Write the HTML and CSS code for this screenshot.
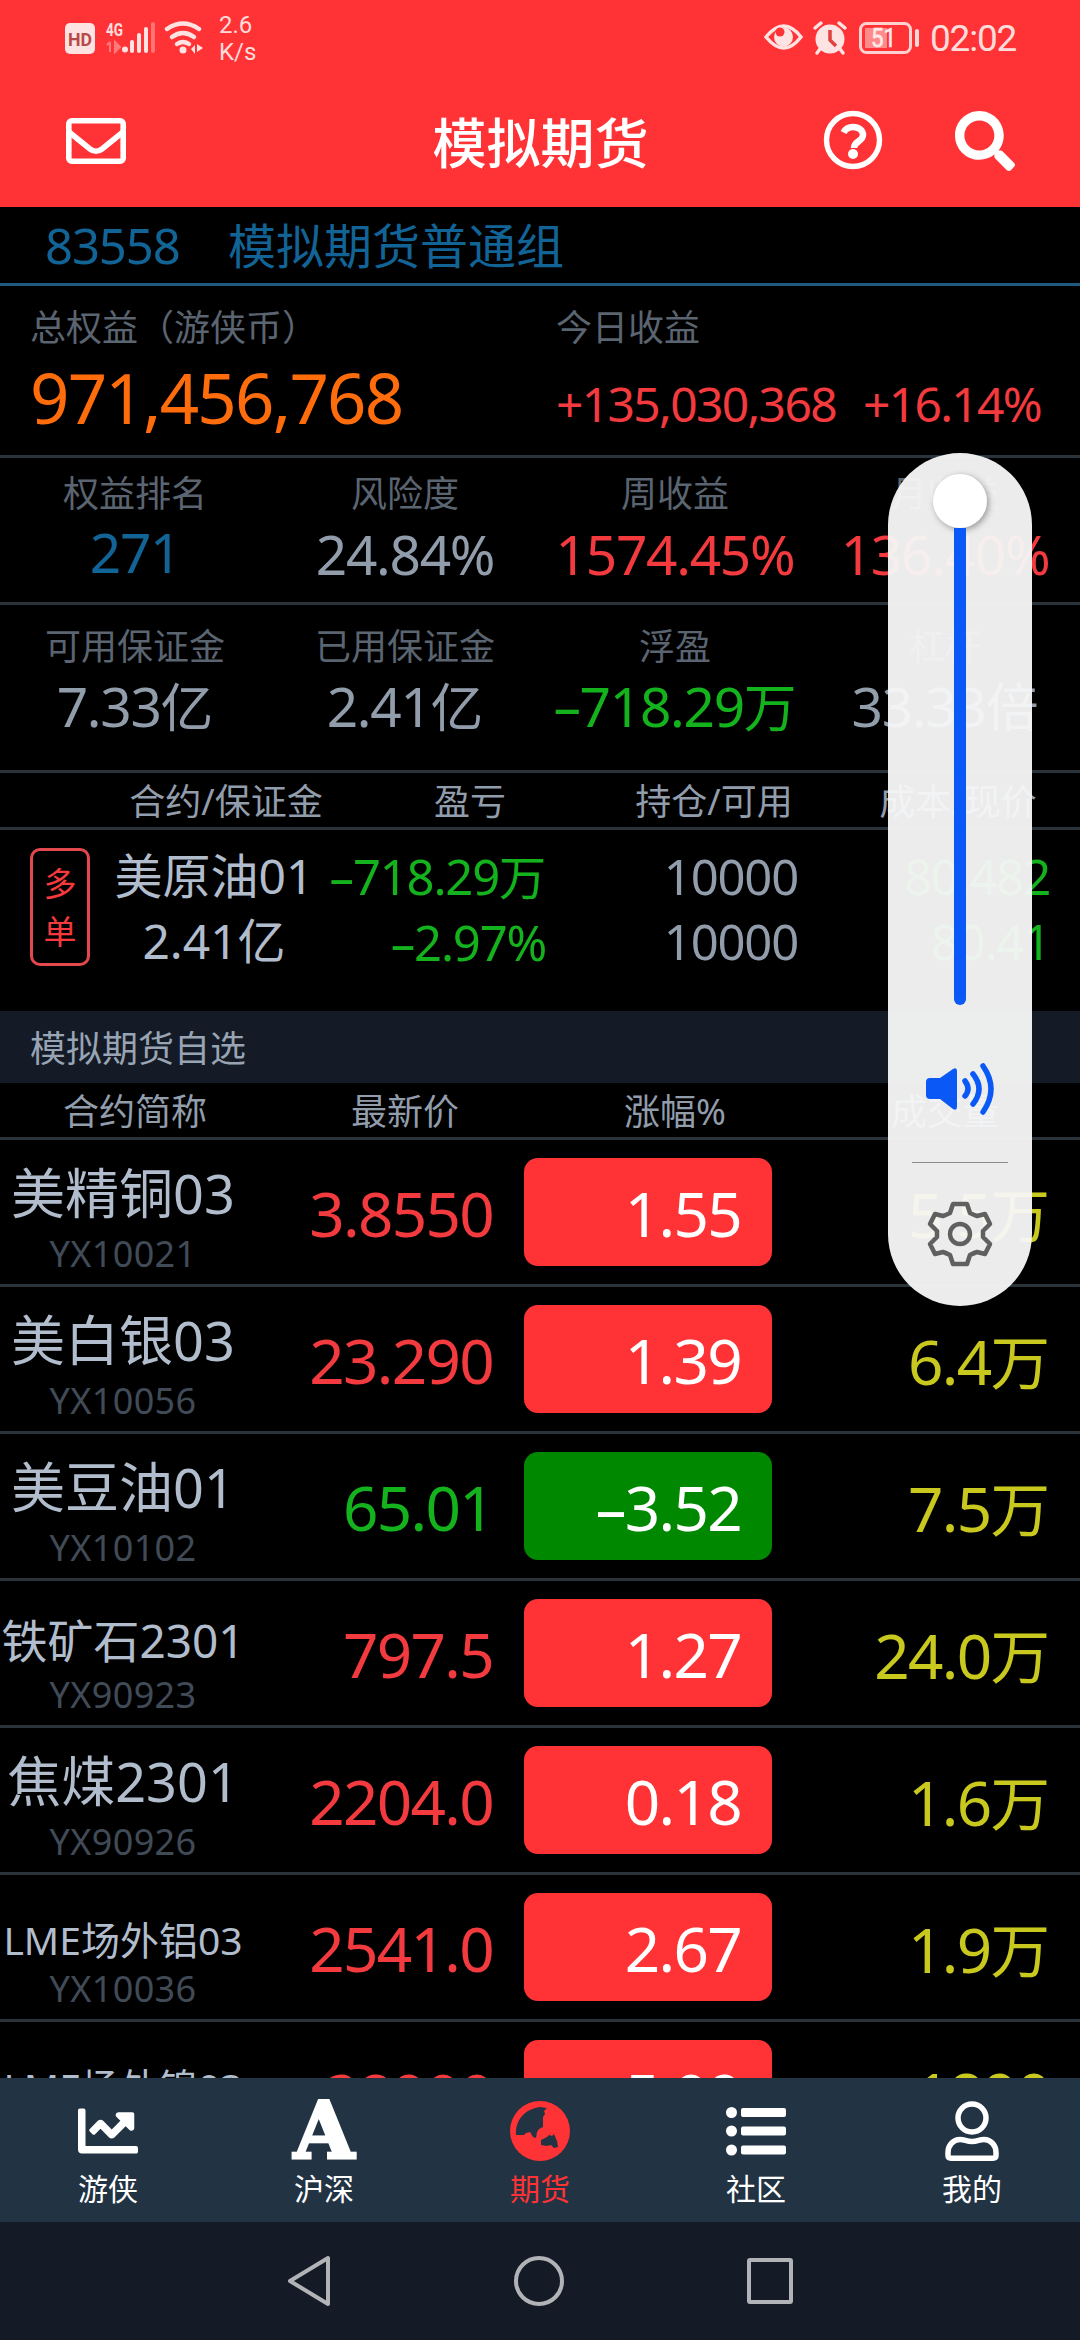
FILE: index.html
```html
<!DOCTYPE html>
<html lang="zh-CN">
<head>
	<meta charset="utf-8">
	<title>模拟期货</title>
	<link rel="stylesheet" href="styles.css">
</head>
<body>
	<div class="screen">
		<header class="header">
			<div class="status">
				<svg class="sig" width="142" height="44" viewBox="0 0 142 44">
					<rect x="0" y="7" width="30" height="31" rx="5" fill="#ffe3e3"/>
					<text x="3" y="29.500" font-size="19" font-weight="bold" fill="#b64a4a" textLength="24" lengthAdjust="spacingAndGlyphs">HD</text>
					<text x="41" y="20" font-size="19" font-weight="bold" fill="#ffdede" textLength="17" lengthAdjust="spacingAndGlyphs">4G</text>
					<path d="M45 26v10M42 29l3-3M50 26v10l5-5z" fill="#ff7a7a" stroke="#ff7a7a" stroke-width="2"/>
					<g fill="#ffe3e3">
						<circle cx="60" cy="33.500" r="3"/>
						<rect x="65" y="24" width="4" height="13" rx="2"/>
						<rect x="72" y="17" width="4" height="20" rx="2"/>
						<rect x="79" y="11" width="4" height="26" rx="2"/>
						<rect x="86" y="6" width="4" height="31" rx="2" fill="#ff7373"/>
					</g>
					<g fill="none" stroke="#ffe3e3" stroke-width="4.500" stroke-linecap="round">
						<path d="M102 13q16-11 32 0"/>
						<path d="M107 21q11-8 22 0"/>
						<path d="M112 28q6-4 12 0"/>
					</g>
					<circle cx="118" cy="34" r="3.500" fill="#ffe3e3"/>
					<path d="M126 33l4-4v9zM132 28v8l6-4z" fill="#ffe3e3"/>
				</svg>
				<div class="speed">2.6<br>K/s</div>
				<svg class="eye" width="156" height="40" viewBox="0 0 156 40">
					<path d="M2 19Q20-3 37 19Q20 41 2 19z" fill="none" stroke="#ffe3e3" stroke-width="3.500"/>
					<circle cx="19.500" cy="19" r="9.500" fill="#ffe3e3"/>
					<circle cx="16" cy="14" r="4.500" fill="#ff3335"/>
					<circle cx="66" cy="21" r="14.500" fill="#ffe3e3"/>
					<path d="M51 10l6-5M81 10l-6-5M56 31l-3 4M76 31l3 4" stroke="#ffe3e3" stroke-width="3.500" stroke-linecap="round"/>
					<path d="M66 12v10l6 6" fill="none" stroke="#e04040" stroke-width="3.500"/>
					<rect x="96.500" y="5.500" width="50" height="29" rx="6" fill="none" stroke="#ffd0d0" stroke-width="3"/>
					<rect x="101" y="10" width="22" height="20" fill="#ff8a8a"/>
					<text x="107" y="29" font-size="25" fill="#ffeaea" stroke="#ffeaea" stroke-width=".6" textLength="25" lengthAdjust="spacingAndGlyphs">51</text>
					<rect x="151" y="11" width="4" height="18" rx="2" fill="#ffd6d6"/>
				</svg>
				<div class="clock">02:02</div>
			</div>
			<div class="titlebar">
				<svg class="mail" width="60" height="46" viewBox="0 0 60 46" fill="none" stroke="#fff">
					<rect x="2.800" y="2.800" width="54.400" height="40.400" rx="3" stroke-width="5.600"/>
					<path d="M3 14l21 17q6 4.500 12 0l21-17" stroke-width="5.600"/>
				</svg>
				<h1 class="title">模拟期货</h1>
				<div class="tools">
					<svg width="60" height="60" viewBox="0 0 60 60" fill="none" stroke="#fff">
						<circle cx="30" cy="30" r="26.500" stroke-width="5.400"/>
						<path d="M20.500 22.500q3-5.500 9.500-5.500c6 0 10 3.500 10 8 0 6.500-9 6-9 13" stroke-width="6.500"/>
						<circle cx="30" cy="44" r="5" fill="#fff" stroke="none"/>
					</svg>
					<svg width="60" height="62" viewBox="0 0 512 512" fill="#fff"><path d="M505 442.700L405.300 343c-4.500-4.500-10.600-7-17-7H372c27.600-35.300 44-79.700 44-128C416 93.100 322.900 0 208 0S0 93.100 0 208s93.100 208 208 208c48.300 0 92.700-16.400 128-44v16.300c0 6.400 2.500 12.500 7 17l99.700 99.700c9.400 9.400 24.600 9.400 33.900 0l28.300-28.300c9.400-9.400 9.400-24.600.1-34zM208 336c-70.700 0-128-57.200-128-128 0-70.700 57.200-128 128-128 70.700 0 128 57.200 128 128 0 70.700-57.200 128-128 128z"/></svg>
				</div>
			</div>
		</header>

		<main class="content">
			<div class="account"><span class="acc-id">83558</span><span>模拟期货普通组</span></div>

			<section class="total">
				<div class="total-left">
					<div class="label">总权益（游侠币）</div>
					<div class="total-num">971,456,768</div>
				</div>
				<div class="total-right">
					<div class="label">今日收益</div>
					<div class="today"><span>+135,030,368</span><span>+16.14%</span></div>
				</div>
			</section>

			<section class="stats">
				<div class="stat"><div class="label">权益排名</div><div class="val rank">271</div></div>
				<div class="stat"><div class="label">风险度</div><div class="val">24.84%</div></div>
				<div class="stat"><div class="label">周收益</div><div class="val red">1574.45%</div></div>
				<div class="stat"><div class="label">月收益</div><div class="val red">136.40%</div></div>
			</section>
			<section class="stats stats2">
				<div class="stat"><div class="label">可用保证金</div><div class="val">7.33<span class="unit">亿</span></div></div>
				<div class="stat"><div class="label">已用保证金</div><div class="val">2.41<span class="unit">亿</span></div></div>
				<div class="stat"><div class="label">浮盈</div><div class="val green">–718.29<span class="unit">万</span></div></div>
				<div class="stat"><div class="label">杠杆</div><div class="val">33.33<span class="unit">倍</span></div></div>
			</section>

			<div class="thead pos-head"><span>合约/保证金</span><span>盈亏</span><span>持仓/可用</span><span>成本/现价</span></div>
			<section class="pos">
				<div class="badge">多<br>单</div>
				<div class="pos-name">美原油01<br>2.41亿</div>
				<div class="pos-cell pos-profit green">–718.29<span class="unit">万</span><br>–2.97%</div>
				<div class="pos-cell">10000<br>10000</div>
				<div class="pos-cell green">80.482<br>80.41</div>
			</section>

			<div class="band">模拟期货自选</div>
			<div class="thead"><span>合约简称</span><span>最新价</span><span>涨幅%</span><span>成交量</span></div>

			<div class="row">
				<div class="name"><b>美精铜03</b><i>YX10021</i></div>
				<div class="price red">3.8550</div><div class="chg up">1.55</div><div class="vol">5.5<span class="unit">万</span></div>
			</div>
			<div class="row">
				<div class="name"><b>美白银03</b><i>YX10056</i></div>
				<div class="price red">23.290</div><div class="chg up">1.39</div><div class="vol">6.4<span class="unit">万</span></div>
			</div>
			<div class="row">
				<div class="name"><b>美豆油01</b><i>YX10102</i></div>
				<div class="price green">65.01</div><div class="chg down">–3.52</div><div class="vol">7.5<span class="unit">万</span></div>
			</div>
			<div class="row">
				<div class="name"><b class="mid">铁矿石2301</b><i>YX90923</i></div>
				<div class="price red">797.5</div><div class="chg up">1.27</div><div class="vol">24.0<span class="unit">万</span></div>
			</div>
			<div class="row">
				<div class="name"><b>焦煤2301</b><i>YX90926</i></div>
				<div class="price red">2204.0</div><div class="chg up">0.18</div><div class="vol">1.6<span class="unit">万</span></div>
			</div>
			<div class="row">
				<div class="name"><b class="small">LME场外铝03</b><i>YX10036</i></div>
				<div class="price red">2541.0</div><div class="chg up">2.67</div><div class="vol">1.9<span class="unit">万</span></div>
			</div>
			<div class="row">
				<div class="name"><b class="small">LME场外镍03</b><i>YX10038</i></div>
				<div class="price red">28900</div><div class="chg up">5.09</div><div class="vol">1890</div>
			</div>
		</main>

		<nav class="tabs">
			<div class="tab">
				<svg width="60" height="60" viewBox="0 0 512 512" fill="#fff"><path d="M496 384H64V80c0-8.840-7.160-16-16-16H16C7.160 64 0 71.160 0 80v336c0 17.670 14.330 32 32 32h464c8.840 0 16-7.160 16-16v-32c0-8.840-7.160-16-16-16zM464 96H345.940c-21.380 0-32.090 25.850-16.970 40.970l32.400 32.400L288 242.750l-73.370-73.370c-12.500-12.500-32.760-12.500-45.250 0l-68.690 68.690c-6.250 6.250-6.250 16.380 0 22.630l22.620 22.620c6.250 6.250 16.380 6.250 22.630 0L192 237.250l73.370 73.370c12.500 12.500 32.760 12.500 45.250 0l96-96 32.400 32.400c15.120 15.120 40.970 4.410 40.970-16.970V112c.01-8.840-7.150-16-15.990-16z"/></svg>
				<span>游侠</span>
			</div>
			<div class="tab">
				<div class="letter">A</div>
				<span>沪深</span>
			</div>
			<div class="tab on">
				<svg width="60" height="60" viewBox="0 0 60 60">
					<circle cx="30" cy="30" r="30" fill="#ff3335"/>
					<path d="M6 34C5 20 14 8 30 6l7 1-3 3 1 3-2 3v10l-4 2-2 3-1 6-3-1-3-5-4 1-2 2z" fill="#223343"/>
					<path d="M31 39l6-3 2-2 3 1 2-2 3 7 1 6-4 1-3-3-4 1-6-1z" fill="#223343"/>
				</svg>
				<span>期货</span>
			</div>
			<div class="tab">
				<svg width="60" height="60" viewBox="0 0 60 60" fill="#fff">
					<circle cx="5.500" cy="11.500" r="5.500"/><circle cx="5.500" cy="30" r="5.500"/><circle cx="5.500" cy="49" r="5.500"/>
					<rect x="15" y="7" width="45" height="9" rx="2"/><rect x="15" y="25.500" width="45" height="9" rx="2"/><rect x="15" y="44.500" width="45" height="9" rx="2"/>
				</svg>
				<span>社区</span>
			</div>
			<div class="tab">
				<svg width="54" height="60" viewBox="0 0 54 60" fill="none" stroke="#fff" stroke-width="5.500">
					<circle cx="27" cy="17" r="14"/>
					<path d="M15 38.500c5 0 6 2 12 2s7-2 12-2c7 0 12 6 12 13v3q0 2.700-3 2.700H6q-3 0-3-2.700v-3c0-7 5-13 12-13z"/>
				</svg>
				<span>我的</span>
			</div>
		</nav>
		<div class="sysnav">
			<svg width="46" height="54" viewBox="0 0 46 54"><path d="M42 4v46L4 27z"/></svg>
			<svg width="52" height="52" viewBox="0 0 52 52"><circle cx="26" cy="26" r="23"/></svg>
			<svg width="48" height="48" viewBox="0 0 48 48"><rect x="3" y="3" width="42" height="42" rx="1"/></svg>
		</div>

		<!-- volume panel -->
		<div class="volume">
			<div class="knob"></div>
			<div class="track"></div>
			<svg class="speaker" width="72" height="54" viewBox="0 0 72 54">
				<path d="M5 16h10L28 7q4-2 4 2v36q0 4-4 2L15 37H5q-4 0-4-4V20q0-4 4-4z" fill="#0a59f7"/>
				<path d="M40 19q6 8 0 15M48 12q12 15 0 30M58 4q16 23 0 46" fill="none" stroke="#0a59f7" stroke-width="5.500" stroke-linecap="round"/>
			</svg>
			<div class="line"></div>
			<svg class="gear" width="68" height="68" viewBox="-34 -34 68 68" fill="none" stroke="#606060" stroke-width="4.500" stroke-linejoin="round">
				<path d="M-7-30H7L10-21Q14-19 17-18L25-20L30-10L23-3V3L30 10L25 20L17 18Q14 19 10 21L7 30H-7L-10 21Q-14 19-17 18L-25 20L-30 10L-23 3V-3L-30-10L-25-20L-17-18Q-14-19-10-21z"/>
				<circle r="10"/>
			</svg>
		</div>
	</div>
</body>
</html>
```
FILE: styles.css
```css
body{
	margin:0;
	background:#000;
}
.screen{
	position:relative;
	width:1080px;
	height:2340px;
	overflow:hidden;
	display:flex;
	flex-direction:column;
	background:#000;
	font-family:"Noto Sans","Noto Sans CJK SC",sans-serif;
	color:#929dac;
	white-space:nowrap;
}
svg{
	display:block;
	flex:none;
}

/* header */
.header{
	height:207px;
	background:#ff3335;
	flex:none;
}
.status{
	height:76px;
	padding:0 66px 0 65px;
	display:flex;
	align-items:center;
	font-family:Roboto,sans-serif;
	color:#ffdcdc;
}
.speed{
	margin-left:12px;
	font-size:24px;
	line-height:27px;
	padding-top:2px;
}
.eye{
	margin-left:auto;
}
.clock{
	margin-left:10px;
	width:84px;
	font-size:37px;
	letter-spacing:-1.2px;
}
.titlebar{
	height:130px;
	display:grid;
	grid-template-columns:1fr auto 1fr;
	align-items:center;
	padding:0 65px 0 66px;
}
.title{
	margin:0;
	padding-top:4px;
	font-size:54px;
	font-weight:500;
	line-height:70px;
	color:#fff;
}
.tools{
	display:flex;
	justify-content:flex-end;
	gap:72px;
}

/* account */
.content{
	height:1871px;
	overflow:hidden;
	flex:none;
}
.account{
	height:76px;
	border-bottom:3px solid #1d5a7d;
	padding-left:45px;
	display:flex;
	gap:50px;
	font-size:48px;
	line-height:77px;
	color:#126497;
}
.acc-id{
	width:133px;
	font-size:49px;
	letter-spacing:-1.1px;
}
.label{
	font-size:36px;
	line-height:50px;
	color:#5b6571;
}
.total{
	height:169px;
	border-bottom:3px solid #2a323a;
	display:flex;
	padding-left:30px;
}
.total-left{
	width:526px;
	padding-top:17px;
}
.total-right{
	padding-top:17px;
}
.total-num{
	font-size:69px;
	line-height:92px;
	margin-top:-2px;
	letter-spacing:-1.8px;
	color:#ff6c0c;
}
.today{
	display:flex;
	gap:27px;
	margin-top:11px;
	font-size:48px;
	line-height:80px;
	letter-spacing:-1.7px;
	color:#f23a3f;
}
.stats{
	height:144px;
	border-bottom:3px solid #2a323a;
	display:grid;
	grid-template-columns:repeat(4,270px);
	text-align:center;
}
.stat{
	padding-top:11px;
}
.val{
	font-size:55px;
	line-height:76px;
	margin-top:-3px;
	letter-spacing:-1.3px;
}
.unit{
	font-size:.96em;
	letter-spacing:0;
}
.stats2{
	height:165px;
}
.stats2 .stat{
	padding-top:17px;
}
.stats2 .val{
	margin-top:-4px;
}
.red{color:#f23a3f;}
.green{color:#14b31e;}
.rank{
	margin-top:-5px;
	color:#126497;
}

/* positions */
.thead{
	height:54px;
	border-bottom:3px solid #2a323a;
	display:grid;
	grid-template-columns:repeat(4,1fr);
	text-align:center;
	font-size:36px;
	line-height:58px;
}
.pos-head{
	padding-left:104px;
}
.pos{
	height:181px;
	display:flex;
	padding:0 30px;
	font-size:49px;
	line-height:65px;
}
.badge{
	box-sizing:border-box;
	width:60px;
	height:118px;
	margin-top:18px;
	padding-top:9px;
	border:3px solid #e2484c;
	border-radius:10px;
	text-align:center;
	font-size:33px;
	line-height:48px;
	color:#f5393d;
}
.pos-name{
	width:248px;
	padding-top:13px;
	text-align:center;
	font-size:48px;
	color:#b1bdcc;
}
.pos-cell{
	width:252px;
	padding-top:14px;
	text-align:right;
	letter-spacing:-1.2px;
}
/* wider than its column, the long sums reach back under the name */
.pos-profit{
	width:238px;
	margin-left:-30px;
}

/* watch list */
.band{
	height:72px;
	padding-left:30px;
	background:#141b26;
	font-size:36px;
	line-height:76px;
	color:#98a4b3;
}
.row{
	height:144px;
	border-bottom:3px solid #2a323a;
	display:flex;
	align-items:center;
	font-size:62px;
	letter-spacing:-1.7px;
}
.name{
	box-sizing:border-box;
	width:246px;
	height:144px;
	padding-bottom:8px;
	display:flex;
	flex-direction:column;
	justify-content:flex-end;
	align-items:center;
	letter-spacing:0;
}
.name b{
	font-size:54px;
	font-weight:400;
	line-height:1.42;
	color:#b1bdcc;
}
.name .mid{
	font-size:46px;
}
.name .small{
	font-size:39px;
}
.name i{
	font-size:36px;
	font-style:normal;
	line-height:44px;
	letter-spacing:.4px;
	color:#414b57;
}
.price{
	width:247px;
	padding-top:2px;
	text-align:right;
}
.chg{
	box-sizing:border-box;
	width:248px;
	height:108px;
	margin-left:31px;
	padding-right:31px;
	border-radius:14px;
	text-align:right;
	line-height:111px;
	color:#fff;
}
.up{background:#ff3335;}
.down{background:#008800;}
.vol{
	width:278px;
	text-align:right;
	color:#c8c81e;
}

/* bottom */
.tabs{
	height:144px;
	flex:none;
	background:#223343;
	display:grid;
	grid-template-columns:repeat(5,1fr);
}
.tab{
	display:flex;
	flex-direction:column;
	align-items:center;
	padding-top:23px;
	font-size:30px;
	line-height:40px;
	color:#fff;
}
.tab span{
	margin-top:8px;
}
.on{
	color:#ff3335;
}
.letter{
	height:60px;
	font:bold 78px/60px "DejaVu Serif",serif;
	-webkit-text-stroke:3px #fff;
}
.sysnav{
	flex:1;
	background:#141b26;
	display:flex;
	justify-content:center;
	align-items:center;
	gap:181px;
}
.sysnav svg{
	fill:none;
	stroke:#b1b3b7;
	stroke-width:4;
	stroke-linejoin:round;
}

/* floats above the page */
.volume{
	position:absolute;
	left:888px;
	top:453px;
	width:144px;
	height:853px;
	border-radius:72px;
	background:rgba(247,247,247,.955);
	display:flex;
	flex-direction:column;
	align-items:center;
}
.knob{
	width:54px;
	height:54px;
	margin-top:21px;
	border-radius:50%;
	background:#fff;
	box-shadow:2px 2px 6px rgba(0,0,0,.35);
	flex:none;
}
.track{
	width:12px;
	height:477px;
	border-radius:0 0 6px 6px;
	background:#0a59f7;
}
.speaker{
	margin-top:57px;
	padding-left:2px;
}
.line{
	width:96px;
	height:1px;
	margin-top:46px;
	background:#8c8c8c;
}
.gear{
	margin-top:37px;
}
```
